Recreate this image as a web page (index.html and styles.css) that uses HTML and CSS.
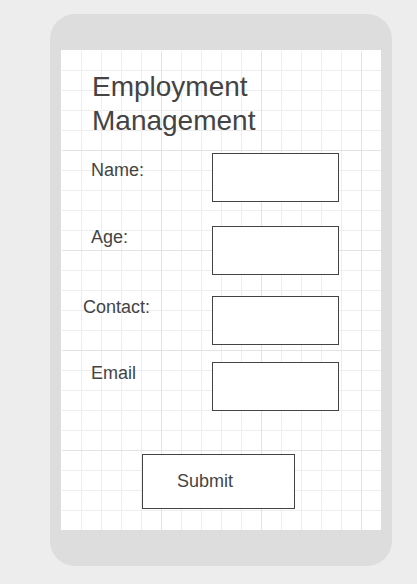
FILE: index.html
```html
<!DOCTYPE html>
<html lang="en">
<head>
<meta charset="utf-8">
<title>Employment Management</title>
<link rel="stylesheet" href="styles.css">
</head>
<body>
<div class="phone">
  <div class="screen">
    <h1 class="title">Employment<br>Management</h1>
    <form class="form">
      <div class="row row-name">
        <label class="label" for="name">Name:</label>
        <input class="field" id="name" type="text">
      </div>
      <div class="row row-age">
        <label class="label" for="age">Age:</label>
        <input class="field" id="age" type="text">
      </div>
      <div class="row row-contact">
        <label class="label" for="contact">Contact:</label>
        <input class="field" id="contact" type="text">
      </div>
      <div class="row row-email">
        <label class="label" for="email">Email</label>
        <input class="field" id="email" type="text">
      </div>
      <button class="submit" type="button">Submit</button>
    </form>
  </div>
</div>
</body>
</html>
```
FILE: styles.css
```css
* { box-sizing: border-box; }
html, body { margin: 0; padding: 0; }
body {
  background: #ededed;
  font-family: "Liberation Sans", Arial, sans-serif;
  color: #444;
  width: 417px;
  height: 584px;
  overflow: hidden;
}
.phone {
  margin: 14px 0 0 50px;
  width: 342px;
  height: 552px;
  padding: 36px 11px;
  background: #dddddd;
  border-radius: 25px;
}
.screen {
  width: 320px;
  height: 480px;
  background-color: #fff;
  background-image:
    linear-gradient(#fff, #fff),
    linear-gradient(#fff, #fff),
    linear-gradient(to right, #e3e3e3 1px, transparent 1px),
    linear-gradient(to bottom, #e3e3e3 1px, transparent 1px),
    linear-gradient(to right, #eeeeee 1px, transparent 1px),
    linear-gradient(to bottom, #eeeeee 1px, transparent 1px);
  background-size: 1px 100%, 100% 1px, 100px 100px, 100px 100px, 20px 20px, 20px 20px;
  background-repeat: no-repeat, no-repeat, repeat, repeat, repeat, repeat;
  background-position: 0 0;
  padding-top: 20px;
}
.title {
  margin: 0;
  padding-left: 31px;
  font-size: 28px;
  line-height: 34px;
  font-weight: normal;
}
.form { margin: 0; }
.row {
  display: flex;
  align-items: flex-start;
}
.label {
  width: 151px;
  padding-left: 30px;
  font-size: 18px;
  line-height: 21px;
}
.field {
  width: 127px;
  height: 49px;
  margin: 0;
  padding: 0;
  border: 1px solid #444;
  background: #fff;
  border-radius: 0;
  outline: none;
}
.row-name { margin-top: 15px; }
.row-name .label { padding-top: 7px; }
.row-age { margin-top: 24px; }
.row-age .label { padding-top: 1px; }
.row-contact { margin-top: 21px; }
.row-contact .label { padding-top: 1px; padding-left: 22px; }
.row-email { margin-top: 17px; }
.row-email .label { padding-top: 1px; }
.submit {
  display: block;
  margin: 43px 0 0 81px;
  width: 153px;
  height: 55px;
  padding: 0 0 0 34px;
  text-align: left;
  border: 1px solid #444;
  border-radius: 0;
  background: #fff;
  color: #444;
  font-family: "Liberation Sans", Arial, sans-serif;
  font-size: 18px;
}
```
